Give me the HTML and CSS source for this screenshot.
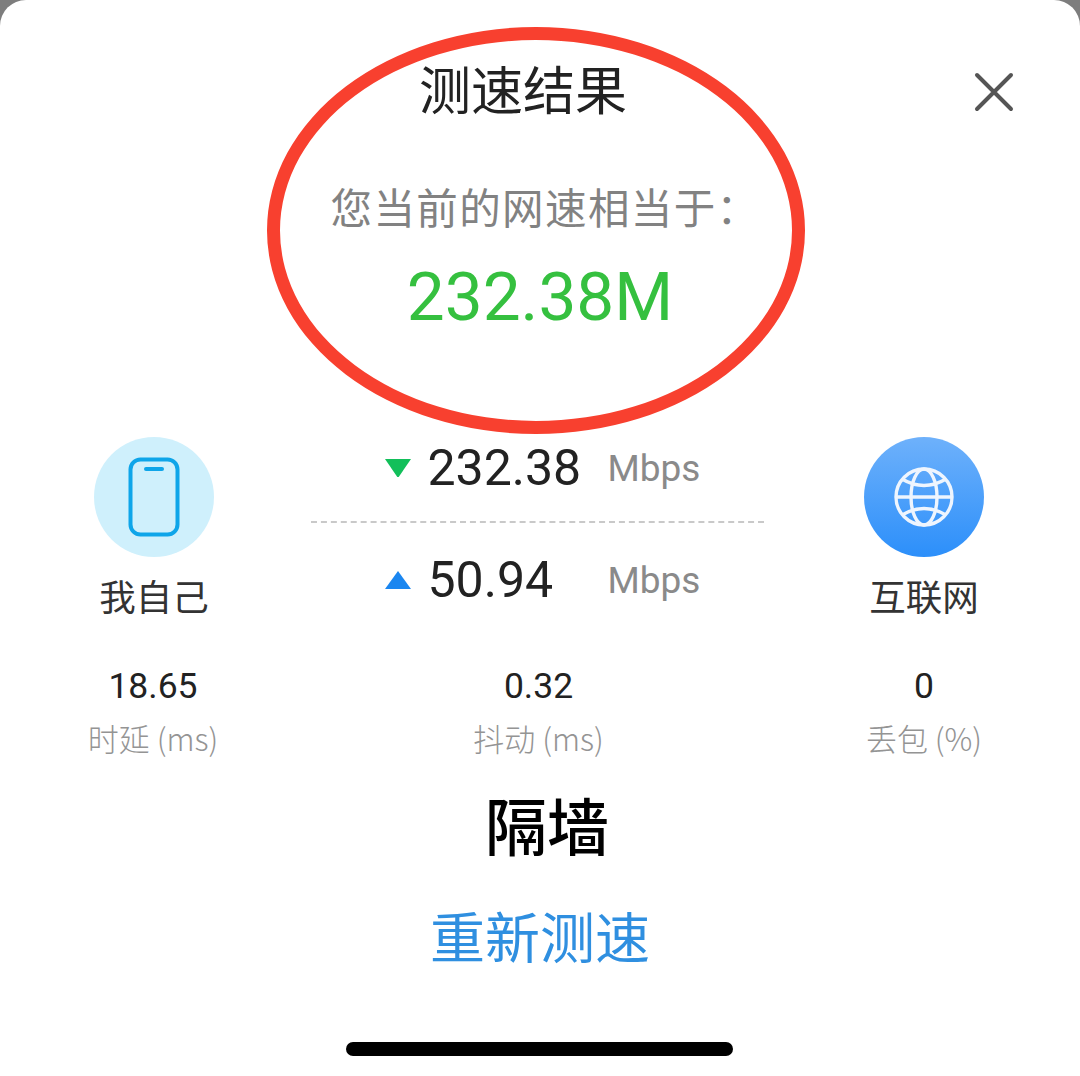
FILE: index.html
```html
<!DOCTYPE html>
<html lang="zh-CN">
<head>
  <meta charset="UTF-8" />
  <title>测速结果</title>
  <link rel="stylesheet" href="styles.css">
</head>
<body>

  <div class="sheet">
    <h1 class="title">测速结果</h1>
    <svg class="close" width="40" height="40" viewBox="0 0 40 40">
      <path d="M3 3 L37 37 M37 3 L3 37" stroke="#555" stroke-width="4" stroke-linecap="round" fill="none" />
    </svg>

    <p class="lead">您当前的网速相当于：</p>
    <p class="speed">232.38M</p>

    <!-- hand-drawn red ring on the screenshot -->
    <div class="ring"></div>

    <div class="meters">
      <div class="node">
        <div class="disc disc-me">
          <svg width="52" height="80" viewBox="0 0 52 80">
            <rect x="2.5" y="2.5" width="47" height="75" rx="10" fill="none" stroke="#0ea5e9" stroke-width="4" />
            <path d="M18 12 H34" stroke="#0ea5e9" stroke-width="4" stroke-linecap="round" />
          </svg>
        </div>
        <div class="node-name">我自己</div>
      </div>

      <div class="rates">
        <div class="rate">
          <svg class="arrow" width="26" height="18" viewBox="0 0 26 18"><path d="M0 0 H26 L13 19 Z" fill="#12bf5a" /></svg>
          <span class="rate-num">232.38</span>
          <span class="rate-unit">Mbps</span>
        </div>
        <div class="rate-line"></div>
        <div class="rate">
          <svg class="arrow" width="26" height="18" viewBox="0 0 26 18"><path d="M0 18 H26 L13 0 Z" fill="#1a86f0" /></svg>
          <span class="rate-num">50.94</span>
          <span class="rate-unit">Mbps</span>
        </div>
      </div>

      <div class="node">
        <div class="disc disc-net">
          <svg width="62" height="62" viewBox="0 0 62 62" fill="none" stroke="#eef5fe" stroke-width="3.4">
            <circle cx="31" cy="31" r="28" />
            <ellipse cx="31" cy="31" rx="13" ry="28" />
            <path d="M3 31 H59" />
            <path d="M9 13 Q31 26 53 13" />
            <path d="M9 49 Q31 36 53 49" />
          </svg>
        </div>
        <div class="node-name">互联网</div>
      </div>
    </div>

    <div class="stats">
      <div class="stat">
        <div class="stat-num">18.65</div>
        <div class="stat-label">时延 (ms)</div>
      </div>
      <div class="stat">
        <div class="stat-num">0.32</div>
        <div class="stat-label">抖动 (ms)</div>
      </div>
      <div class="stat">
        <div class="stat-num">0</div>
        <div class="stat-label">丢包 (%)</div>
      </div>
    </div>

    <div class="note">隔墙</div>
    <div class="retry">重新测速</div>
    <div class="home-bar"></div>
  </div>

</body>
</html>
```

FILE: styles.css
```css
html, body {
  margin: 0;
  height: 1076px;
  overflow: hidden;
}

body {
  background: #7d7d7d;
  font-family: "Noto Sans CJK SC", sans-serif;
}

.sheet {
  position: relative;
  height: 1076px;
  background: #fff;
  border-radius: 26px 26px 0 0;
  display: flex;
  flex-direction: column;
  align-items: center;
}

.title {
  margin: 55px 0 0;
  transform: translateX(-17px);
  font-size: 52px;
  line-height: 66px;
  font-weight: 400;
  color: #222;
}

.close {
  position: absolute;
  top: 72px;
  right: 66px;
}

.lead {
  margin: 58px 0 0;
  transform: translateX(5px);
  font-size: 41.5px;
  letter-spacing: 1.4px;
  line-height: 54px;
  font-weight: 400;
  color: #828282;
}

.speed {
  margin: 26px 0 0;
  font-family: Roboto, sans-serif;
  font-size: 67.5px;
  line-height: 76px;
  color: #35c03f;
}

.ring {
  position: absolute;
  left: 267px;
  top: 27px;
  width: 538px;
  height: 407px;
  box-sizing: border-box;
  border: 13px solid #f8402f;
  border-radius: 50%;
}

.meters {
  align-self: stretch;
  margin-top: 102px;
  padding: 0 96px 0 94px;
  display: flex;
  justify-content: space-between;
}

.node {
  width: 120px;
  display: flex;
  flex-direction: column;
  align-items: center;
}

.disc {
  width: 120px;
  height: 120px;
  border-radius: 50%;
  display: flex;
  align-items: center;
  justify-content: center;
}

.disc-me {
  background: #cff0fc;
}

.disc-net {
  background: linear-gradient(180deg, #6eb1fb, #2c8ffa);
}

.node-name {
  margin-top: 15px;
  font-size: 36.5px;
  line-height: 48px;
  font-weight: 400;
  color: #333;
  white-space: nowrap;
}

.rates {
  width: 453px;
  margin: 3px 4px 0 0;
}

.rate {
  height: 56px;
  display: flex;
  align-items: center;
  padding-left: 74px;
}

.arrow {
  flex: none;
}

.rate-num {
  width: 180px;
  margin-left: 17px;
  font-family: Roboto, sans-serif;
  font-size: 50px;
  color: #222;
}

.rate-unit {
  font-family: Roboto, sans-serif;
  font-size: 37px;
  color: #8a8a8a;
}

.rate-line {
  margin: 25px 0 29px;
  border-top: 2px dashed #c9c9c9;
}

.stats {
  align-self: stretch;
  margin-top: 44px;
  padding: 0 86px 0 83px;
  display: flex;
  justify-content: space-between;
}

.stat {
  width: 140px;
  text-align: center;
}

.stat-num {
  font-family: Roboto, sans-serif;
  font-size: 35.5px;
  line-height: 44px;
  color: #222;
}

.stat-label {
  margin-top: 10px;
  font-size: 31px;
  line-height: 40px;
  font-weight: 300;
  color: #949494;
  white-space: nowrap;
}

.note {
  margin-top: 26px;
  transform: translateX(7px);
  font-size: 62px;
  line-height: 80px;
  font-weight: 500;
  color: #000;
}

.retry {
  margin-top: 34px;
  font-size: 55px;
  line-height: 72px;
  font-weight: 400;
  color: #2f8fe0;
}

.home-bar {
  position: absolute;
  left: 346px;
  bottom: 20px;
  width: 387px;
  height: 14px;
  border-radius: 7px;
  background: #000;
}
```
